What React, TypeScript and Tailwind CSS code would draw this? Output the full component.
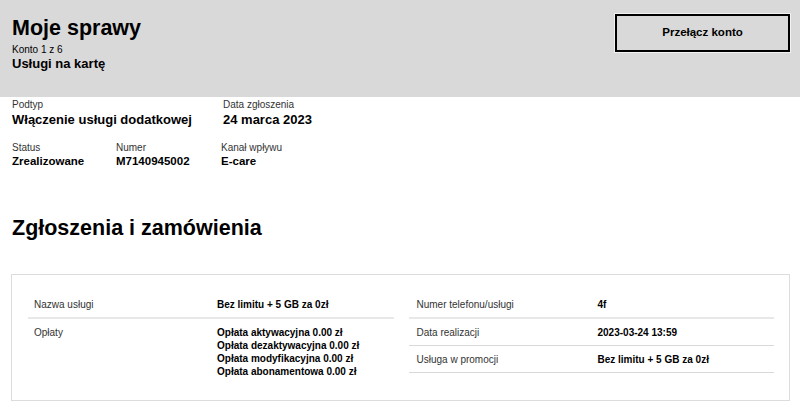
import React from "react";

const font = { fontFamily: '"Liberation Sans", Arial, Helvetica, sans-serif' };

function Row({
  label,
  children,
  border,
  pad,
}: {
  label: string;
  children: React.ReactNode;
  border: string;
  pad: string;
}) {
  return (
    <div className={`grid grid-cols-[189px_1fr] ${border}`}>
      <div className={`${pad} pt-[7px] pb-[6px] text-[10px] leading-[13px] text-[#333]`}>{label}</div>
      <div className="pt-[7px] pb-[6px] text-[10px] leading-[13px] font-bold text-black">{children}</div>
    </div>
  );
}

export default function App() {
  return (
    <div className="w-[800px] h-[409px] bg-white text-black overflow-hidden" style={font}>
      {/* Header */}
      <div className="h-[97px] bg-[#d9d9d9] flex justify-between items-start pl-3 pr-[10px]">
        <div className="pt-[15px]">
          <h1 className="text-[21.5px] leading-[26px] font-bold">Moje sprawy</h1>
          <div className="mt-[2px] text-[10px] leading-[13px]">Konto 1 z 6</div>
          <div className="text-[13px] leading-[16px] font-bold">Usługi na kartę</div>
        </div>
        <button className="mt-[14px] w-[175px] h-[38px] border-2 border-black bg-[#d9d9d9] shadow-[0_0_0_1px_#f2f2f2] text-[11.5px] font-bold flex items-center justify-center">
          Przełącz konto
        </button>
      </div>

      {/* Details */}
      <div className="pl-3 pt-[1.5px]">
        <div className="flex">
          <div className="w-[211px]">
            <div className="text-[10px] leading-[12px] text-[#333]">Podtyp</div>
            <div className="mt-[1px] text-[13px] leading-[16px] font-bold">Włączenie usługi dodatkowej</div>
          </div>
          <div>
            <div className="text-[10px] leading-[12px] text-[#333]">Data zgłoszenia</div>
            <div className="mt-[1px] text-[13px] leading-[16px] font-bold">24 marca 2023</div>
          </div>
        </div>
        <div className="flex mt-[14px]">
          <div className="w-[104px]">
            <div className="text-[10px] leading-[12px] text-[#333]">Status</div>
            <div className="text-[11.5px] leading-[14px] font-bold">Zrealizowane</div>
          </div>
          <div className="w-[105px]">
            <div className="text-[10px] leading-[12px] text-[#333]">Numer</div>
            <div className="text-[11.5px] leading-[14px] font-bold">M7140945002</div>
          </div>
          <div>
            <div className="text-[10px] leading-[12px] text-[#333]">Kanał wpływu</div>
            <div className="text-[11.5px] leading-[14px] font-bold">E-care</div>
          </div>
        </div>
        <h2 className="mt-[47px] text-[21.5px] leading-[26px] font-bold">Zgłoszenia i zamówienia</h2>
      </div>

      {/* Card */}
      <div className="ml-[11px] mt-[33px] w-[779px] border border-[#dcdcdc] pl-4 pr-[15px] pt-4 pb-4 grid grid-cols-2 gap-x-[15px] items-start">
        <div>
          <Row label="Nazwa usługi" border="border-b-2 border-[#e8e8e8]" pad="pl-[6px]">
            Bez limitu + 5 GB za 0zł
          </Row>
          <Row label="Opłaty" border="" pad="pl-[6px]">
            <div>Opłata aktywacyjna 0.00 zł</div>
            <div>Opłata dezaktywacyjna 0.00 zł</div>
            <div>Opłata modyfikacyjna 0.00 zł</div>
            <div>Opłata abonamentowa 0.00 zł</div>
          </Row>
        </div>
        <div>
          <Row label="Numer telefonu/usługi" border="border-b-2 border-[#e8e8e8]" pad="pl-[8px]">
            4f
          </Row>
          <Row label="Data realizacji" border="border-b border-[#d9d9d9]" pad="pl-[8px]">
            2023-03-24 13:59
          </Row>
          <Row label="Usługa w promocji" border="border-b border-[#d9d9d9]" pad="pl-[8px]">
            Bez limitu + 5 GB za 0zł
          </Row>
        </div>
      </div>
    </div>
  );
}
